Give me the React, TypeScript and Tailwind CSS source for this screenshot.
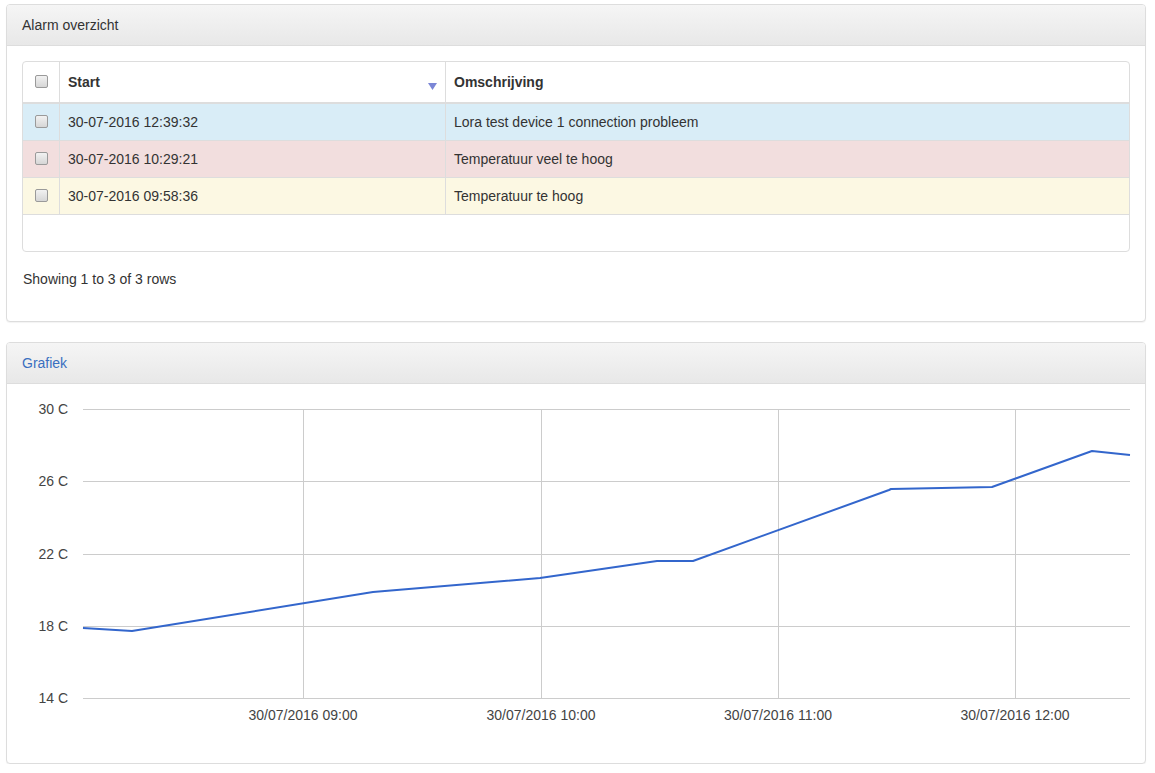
import React from 'react';

type Row = { start: string; text: string; bg: string };

const rows: Row[] = [
  { start: '30-07-2016 12:39:32', text: 'Lora test device 1 connection probleem', bg: 'bg-[#d9edf7]' },
  { start: '30-07-2016 10:29:21', text: 'Temperatuur veel te hoog', bg: 'bg-[#f2dede]' },
  { start: '30-07-2016 09:58:36', text: 'Temperatuur te hoog', bg: 'bg-[#fcf8e3]' },
];

const yTicks = [
  { label: '30 C', y: 409 },
  { label: '26 C', y: 481 },
  { label: '22 C', y: 554 },
  { label: '18 C', y: 626 },
  { label: '14 C', y: 698 },
];

const xTicks = [
  { label: '30/07/2016 09:00', x: 303 },
  { label: '30/07/2016 10:00', x: 541 },
  { label: '30/07/2016 11:00', x: 778 },
  { label: '30/07/2016 12:00', x: 1015 },
];

const points = [
  [83, 628], [132, 631], [373, 592], [540, 578], [657, 561], [693, 561],
  [889, 490], [891, 489], [992, 487], [1092, 451], [1130, 455],
];

const Panel: React.FC<{ title: string; titleClass?: string; children: React.ReactNode; className?: string }> = ({ title, titleClass, children, className }) => (
  <div className={`border border-[#ddd] rounded-[4px] bg-white shadow-[0_1px_1px_rgba(0,0,0,0.05)] ${className || ''}`}>
    <div className={`px-[15px] py-[10px] leading-[20px] text-[14px] border-b border-[#ddd] rounded-t-[3px] bg-gradient-to-b from-[#f5f5f5] to-[#e8e8e8] ${titleClass || 'text-[#333]'}`}>
      {title}
    </div>
    {children}
  </div>
);

const Check = () => (
  <input
    type="checkbox"
    className="appearance-none w-[13px] h-[13px] m-0 border border-[#9a9a9a] rounded-[2px] bg-gradient-to-b from-[#f2f2f2] to-[#d6d6d6]"
    readOnly
  />
);

export default function App() {
  return (
    <div className="pl-[6px] pr-[9px] pt-[4px] bg-white text-[#333] text-[14px]" style={{ fontFamily: '"Liberation Sans", Arial, sans-serif' }}>
      <Panel title="Alarm overzicht">
        <div className="px-[15px] pt-[15px] pb-[15px]">
          <div className="border border-[#ddd] rounded-[4px] overflow-hidden">
            {/* header */}
            <div className="grid grid-cols-[36px_386px_1fr] border-b-2 border-[#ddd] font-bold">
              <div className="h-[40px] flex items-start justify-center pt-[13px]">
                <Check />
              </div>
              <div className="h-[40px] border-l border-[#ddd] px-[8px] leading-[40px] flex justify-between items-center">
                <span>Start</span>
                <svg width="9" height="7" viewBox="0 0 9 7" className="mt-[8px]">
                  <polygon points="0,0 9,0 4.5,7" fill="#7b86d6" />
                </svg>
              </div>
              <div className="h-[40px] border-l border-[#ddd] px-[8px] leading-[40px]">Omschrijving</div>
            </div>
            {rows.map((r) => (
              <div key={r.start} className={`grid grid-cols-[36px_386px_1fr] border-b border-[#ddd] ${r.bg}`}>
                <div className="h-[36px] flex items-start justify-center pt-[11px]">
                  <Check />
                </div>
                <div className="border-l border-[#ddd] px-[8px] leading-[36px]">{r.start}</div>
                <div className="border-l border-[#ddd] px-[8px] leading-[36px]">{r.text}</div>
              </div>
            ))}
            <div className="h-[36px]" />
          </div>
          <div className="py-[17px] leading-[20px] pl-[1px]">Showing 1 to 3 of 3 rows</div>
        </div>
      </Panel>

      <Panel title="Grafiek" titleClass="text-[#3a6fc0]" className="mt-[20px]">
        <svg width="1138" height="379" viewBox="7 384 1138 379" className="block">
          {yTicks.map((t) => (
            <g key={t.label}>
              <line x1="83" x2="1130" y1={t.y + 0.5} y2={t.y + 0.5} stroke="#ccc" strokeWidth="1" />
              <text x="68" y={t.y + 5} textAnchor="end" fontSize="14" fill="#444" fontFamily="Liberation Sans, Arial, sans-serif">
                {t.label}
              </text>
            </g>
          ))}
          {xTicks.map((t) => (
            <g key={t.label}>
              <line x1={t.x + 0.5} x2={t.x + 0.5} y1="409" y2="698" stroke="#ccc" strokeWidth="1" />
              <text x={t.x} y="720" textAnchor="middle" fontSize="14" fill="#444" fontFamily="Liberation Sans, Arial, sans-serif">
                {t.label}
              </text>
            </g>
          ))}
          <polyline
            points={points.map((p) => p.join(',')).join(' ')}
            fill="none"
            stroke="#3366cc"
            strokeWidth="2"
            strokeLinejoin="round"
          />
        </svg>
      </Panel>
    </div>
  );
}
